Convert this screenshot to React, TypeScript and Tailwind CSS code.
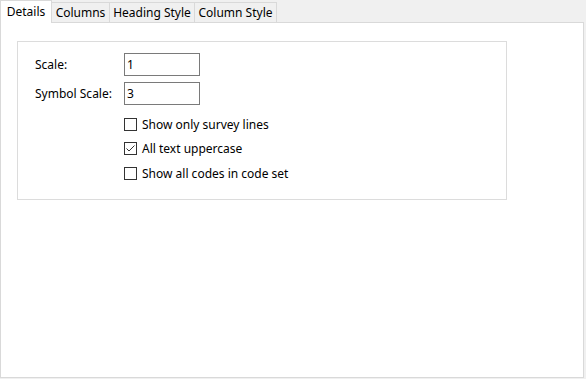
import React from "react";

const font = { fontFamily: '"Noto Sans", "Open Sans", sans-serif' };

function Check({ label, checked, className }: { label: string; checked?: boolean; className?: string }) {
  return (
    <div className={"flex items-center h-[13px] " + (className ?? "")}>
      <div className="w-[13px] h-[13px] border border-[#333333] bg-white flex items-center justify-center">
        {checked && (
          <svg width="11" height="11" viewBox="0 0 11 11">
            <path d="M1.5 5.5 L4 8 L9.5 2.5" fill="none" stroke="#333333" strokeWidth="1" />
          </svg>
        )}
      </div>
      <span className="ml-[5px] text-[12px] text-black leading-none">{label}</span>
    </div>
  );
}

export default function App() {
  return (
    <div className="w-[586px] h-[379px] bg-[#f0f0f0] overflow-hidden" style={font}>
      <div className="flex items-end h-[22px]">
        <div className="relative z-10 -mb-px w-[52px] h-[23px] flex items-center justify-center bg-white border border-b-0 border-[#d9d9d9] text-[12px] text-black whitespace-nowrap">
          Details
        </div>
        <div className="w-[58px] h-[20px] flex items-center justify-center bg-[#f0f0f0] border border-b-0 border-l-0 border-[#d9d9d9] text-[12px] text-black whitespace-nowrap">
          Columns
        </div>
        <div className="w-[85px] h-[20px] flex items-center justify-center bg-[#f0f0f0] border border-b-0 border-l-0 border-[#d9d9d9] text-[12px] text-black whitespace-nowrap">
          Heading Style
        </div>
        <div className="w-[82px] h-[20px] flex items-center justify-center bg-[#f0f0f0] border border-b-0 border-l-0 border-[#d9d9d9] text-[12px] text-black whitespace-nowrap">
          Column Style
        </div>
      </div>
      <div className="w-[584px] h-[356px] bg-white border border-[#d9d9d9] pt-[18px] pl-[16px]">
        <div className="w-[490px] h-[159px] border border-[#dcdcdc] pl-[17px] pt-[11px]">
          <div className="flex items-center h-[23px]">
            <span className="w-[89px] text-[12px] text-black">Scale:</span>
            <div className="w-[76px] h-[23px] border border-[#7a7a7a] bg-white flex items-center pl-[2px] text-[12px] text-black">1</div>
          </div>
          <div className="flex items-center h-[23px] mt-[6px]">
            <span className="w-[89px] text-[12px] text-black">Symbol Scale:</span>
            <div className="w-[76px] h-[23px] border border-[#7a7a7a] bg-white flex items-center pl-[2px] text-[12px] text-black">3</div>
          </div>
          <div className="pl-[89px]">
            <Check label="Show only survey lines" className="mt-[13px]" />
            <Check label="All text uppercase" checked className="mt-[11px]" />
            <Check label="Show all codes in code set" className="mt-[12px]" />
          </div>
        </div>
      </div>
    </div>
  );
}
